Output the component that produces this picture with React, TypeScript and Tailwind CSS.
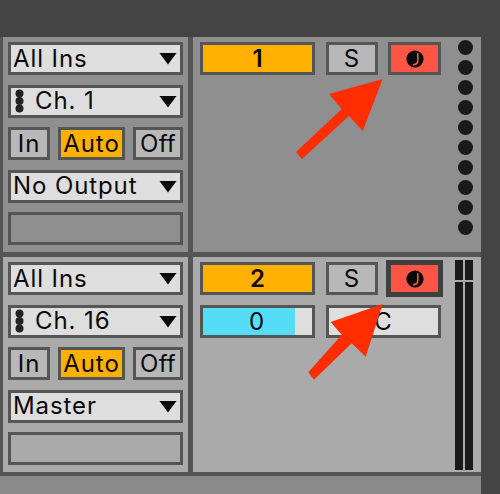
import React from 'react';

const BOX = 'border-[3px] border-[#555555] flex items-center';
const LABEL = 'text-[24px] leading-none tracking-[0.9px]';

const Arrowhead = () => (
  <svg className="w-[18px] h-[13px] shrink-0" viewBox="0 0 18 13">
    <path d="M0.5 1h17L9 12.5z" fill="#0a0a0a" />
  </svg>
);

const Grip = () => (
  <svg className="w-[9px] h-[24px] shrink-0" viewBox="0 0 9 24">
    <circle cx="4.5" cy="4.5" r="4" fill="#222222" />
    <circle cx="4.5" cy="12" r="4" fill="#222222" />
    <circle cx="4.5" cy="19.5" r="4" fill="#222222" />
  </svg>
);

const NoteIcon = () => (
  <svg className="w-[18px] h-[18px]" viewBox="0 0 18 18">
    <circle cx="9" cy="9" r="8.6" fill="#0a0a0a" />
    <path d="M11.8 3.2v7.2c0 2.8-2 4.2-4.8 4.2" fill="none" stroke="#ff5544" strokeWidth="1.6" />
  </svg>
);

const Dropdown = ({ label, grip }: { label: string; grip?: boolean }) => (
  <div className={`${BOX} h-[33px] bg-[#dedede] pl-[2px] pr-[3px] justify-between`}>
    <span className="flex items-center">
      {grip && (
        <span className="ml-[2px] mr-[11px] flex">
          <Grip />
        </span>
      )}
      <span className={LABEL}>{label}</span>
    </span>
    <Arrowhead />
  </div>
);

const ModeRow = () => (
  <div className={`flex justify-between ${LABEL}`}>
    <div className={`${BOX} w-[42px] h-[33px] justify-center bg-[#b8b8b8]`}>In</div>
    <div className={`${BOX} w-[67px] h-[33px] justify-center bg-[#ffb000]`}>Auto</div>
    <div className={`${BOX} w-[50px] h-[33px] justify-center bg-[#b8b8b8] tracking-[0.2px]`}>Off</div>
  </div>
);

const InputColumn = ({ output, channel, bg }: { output: string; channel: string; bg: string }) => (
  <div className={`w-[185px] shrink-0 flex flex-col gap-[9.5px] px-[5px] pt-[5px] ${bg}`}>
    <Dropdown label="All Ins" />
    <Dropdown label={channel} grip />
    <ModeRow />
    <Dropdown label={output} />
    <div className={`${BOX} h-[33px]`} />
  </div>
);

const SoloButton = () => (
  <div className={`${BOX} w-[52px] h-[33px] shrink-0 justify-center bg-[#b8b8b8] ${LABEL}`}>S</div>
);

const NumberButton = ({ n }: { n: number }) => (
  <div className={`${BOX} w-[115px] h-[33px] shrink-0 justify-center bg-[#ffb000] text-[24px] font-semibold leading-none`}>{n}</div>
);

export default function App() {
  return (
    <div
      className="relative w-[500px] h-[494px] overflow-hidden bg-[#444444] text-[#0a0a0a]"
      style={{ fontFamily: 'Inter, "Noto Sans", sans-serif' }}
    >
      <div className="h-[37px]" />
      <div className="w-[481px] bg-[#555555] pl-[3px] flex flex-col gap-[5px]">
        {/* Track 1 */}
        <div className="flex h-[215px] gap-[5px]">
          <InputColumn output="No Output" channel="Ch. 1" bg="bg-[#8f8f8f]" />
          <div className="flex-1 bg-[#8f8f8f] flex pl-[7px] pt-[5px]">
            <NumberButton n={1} />
            <div className="ml-[11px]">
              <SoloButton />
            </div>
            <div className={`${BOX} ml-[10px] w-[53px] h-[33px] justify-center bg-[#ff5544]`}>
              <NoteIcon />
            </div>
            <div className="ml-[17px] -mt-[2px] flex flex-col gap-[5px]">
              {Array.from({ length: 10 }).map((_, i) => (
                <div key={i} className="w-[15px] h-[15px] rounded-full bg-[#1a1a1a]" />
              ))}
            </div>
          </div>
        </div>

        {/* Track 2 */}
        <div className="flex h-[215px] gap-[5px]">
          <InputColumn output="Master" channel="Ch. 16" bg="bg-[#aaaaaa]" />
          <div className="flex-1 bg-[#aaaaaa] flex pl-[7px] pt-[5px]">
            <div className="w-[241px] shrink-0 flex flex-col gap-[10px]">
              <div className="flex">
                <NumberButton n={2} />
                <div className="ml-[11px]">
                  <SoloButton />
                </div>
                <div className="ml-[8px] -mr-[2px] -my-[2px] w-[57px] h-[37px] shrink-0 border-[5px] border-[#404040] bg-[#ff5544] flex items-center justify-center">
                  <NoteIcon />
                </div>
              </div>
              <div className="flex gap-[11px]">
                <div className={`${BOX} w-[115px] h-[33px] shrink-0 bg-[#dedede]`}>
                  <div className={`w-[92px] h-full bg-[#55ddf8] flex items-center justify-center pl-[16px] ${LABEL}`}>
                    0
                  </div>
                </div>
                <div className={`${BOX} w-[115px] h-[33px] shrink-0 justify-center bg-[#dedede] ${LABEL}`}>C</div>
              </div>
            </div>
            <div className="ml-[14px] -mt-[2px] flex gap-[2px] h-[210px]">
              {[0, 1].map((i) => (
                <div key={i} className="w-[8px] flex flex-col gap-[2px]">
                  <div className="h-[20px] bg-[#1a1a1a]" />
                  <div className="flex-1 bg-[#1a1a1a]" />
                </div>
              ))}
            </div>
          </div>
        </div>
      </div>
      <div className="w-[481px] h-[4px] bg-[#555555]" />
      <div className="w-[481px] h-[18px] bg-[#8a8a8a]" />

      {/* annotation arrows */}
      <svg className="absolute inset-0 w-[500px] h-[494px] pointer-events-none" viewBox="0 0 500 494">
        <path d="M382.7 79 329 94 341.7 109 296 152 302 159 349 116 362.7 131z" fill="#ff2d00" />
        <path d="M382.7 304 330.7 322 341.7 334.7 308.3 372.3 314 379.7 351.7 343.3 365.7 356.7z" fill="#ff2d00" />
      </svg>
    </div>
  );
}
